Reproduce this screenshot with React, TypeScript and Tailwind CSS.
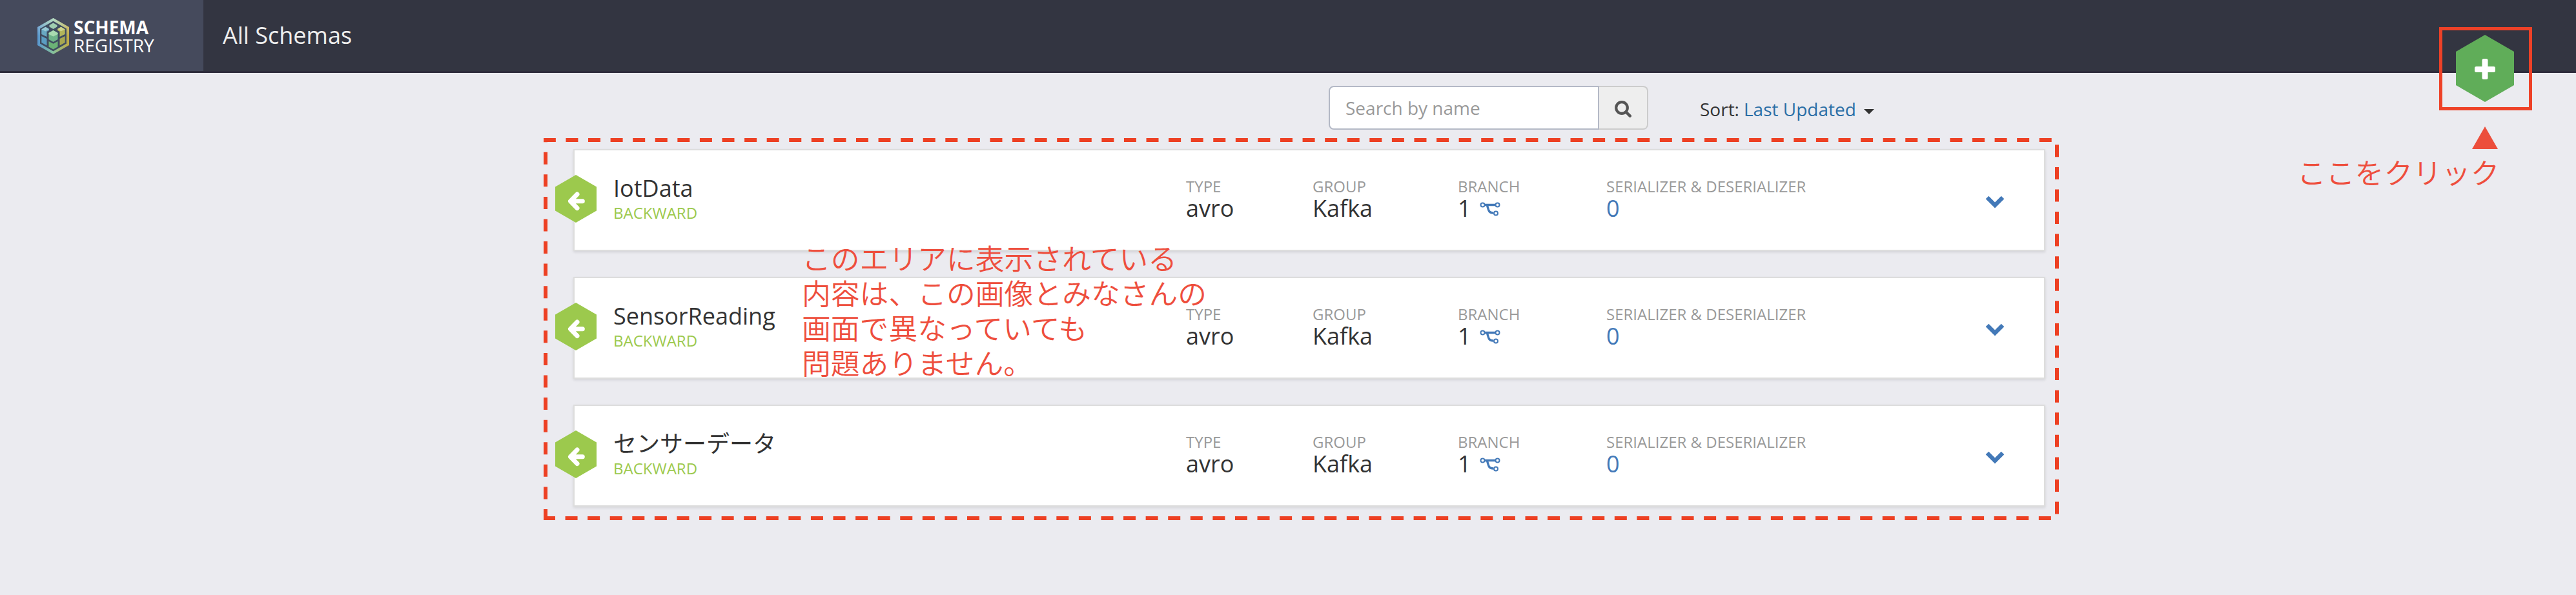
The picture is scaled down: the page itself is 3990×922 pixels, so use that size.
const SANS = 'font-["Open_Sans","Noto_Sans_CJK_JP",sans-serif]';

const schemas = ["IotData", "SensorReading", "センサーデータ"];

function Logo() {
  return (
    <svg className="h-[56px] w-[49px] shrink-0" viewBox="0 0 49 56" fill="none">
      <defs>
        <linearGradient id="edge" x1="0" y1="0" x2="49" y2="0" gradientUnits="userSpaceOnUse">
          <stop offset="0" stopColor="#5896d0" />
          <stop offset="0.5" stopColor="#86c29c" />
          <stop offset="1" stopColor="#c2a943" />
        </linearGradient>
        <linearGradient id="shine" x1="0" y1="0" x2="0" y2="56" gradientUnits="userSpaceOnUse">
          <stop offset="0" stopColor="#fff" stopOpacity="0.4" />
          <stop offset="0.5" stopColor="#fff" stopOpacity="0" />
        </linearGradient>
      </defs>
      <path d="M24.500 2.300 47 15.200V40.800L24.500 53.700 2 40.800V15.200Z" fill="#3f4c60" stroke="url(#edge)" strokeWidth="4" />
      <path d="M24.500 2.300 47 15.200V40.800L24.500 53.700 2 40.800V15.200Z" stroke="url(#shine)" strokeWidth="4" />
      <path d="M24.500 7.500 30.500 11V13.500L24.500 17 18.500 13.500V11Z" fill="#9fceb0" />
      <path d="M12.500 13.800 18 17V19L14.500 21V29L6.300 25V17.500Z" fill="#68a8c2" />
      <path d="M12.500 13.800 18 17 12.500 20.500 6.300 17.500Z" fill="#97c9d4" />
      <path d="M36.500 13.800 31 17V19L34.500 21V29L42.700 25V17.500Z" fill="#b3b55a" />
      <path d="M36.500 13.800 31 17 36.500 20.500 42.700 17.500Z" fill="#cfd58a" />
      <path d="M24.500 19 31.500 23V33L24.500 37 17.500 33V23Z" fill="#6fb489" />
      <path d="M24.500 19 31.500 23V25L24.500 28.500 17.500 25V23Z" fill="#a9dbb0" />
      <path d="M6.300 28 14.500 32V42.500L6.300 38Z" fill="#5b9dc2" />
      <path d="M42.700 28 34.500 32V42.500L42.700 38Z" fill="#a8a851" />
      <path d="M17.500 36 24.500 39.800 31.500 36V44.500L24.500 48.500 17.500 44.500Z" fill="#6bb276" />
    </svg>
  );
}

function BranchIcon() {
  return (
    <svg className="mt-[2px] h-[22px] w-[32px]" viewBox="0 0 32 22" fill="none" stroke="#4379b8">
      <path d="M7 4.500H25M11.500 5.500C13.500 11 13 17 21 17" strokeWidth="3.400" />
      <circle cx="4.500" cy="4.500" r="3" strokeWidth="2" fill="#fff" />
      <circle cx="27.500" cy="4.500" r="3" strokeWidth="2" fill="#fff" />
      <circle cx="25" cy="17.500" r="3" strokeWidth="2" fill="#fff" />
    </svg>
  );
}

function Field({ label, value, link, icon, width }: { label: string; value: string; link?: boolean; icon?: boolean; width: string }) {
  return (
    <div className={width}>
      <div className="text-[24px] leading-[32px] text-[#999]">{label}</div>
      <div className={`flex items-center gap-[13px] text-[36px] leading-[36px] ${link ? "text-[#4379b8]" : "text-[#333]"}`}>
        {value}
        {icon && <BranchIcon />}
      </div>
    </div>
  );
}

function SchemaCard({ name }: { name: string }) {
  return (
    <div className="relative flex h-[158px] w-[2280px] border-2 border-[#ddd] bg-white pl-[60px] shadow-[0_2px_4px_rgba(0,0,0,0.1)]">
      <svg className="absolute top-[38px] left-[-30px] h-[74px] w-[64px]" viewBox="0 0 64 74" fill="none">
        <path d="M32 0 64 18.500V55.500L32 74 0 55.500V18.500Z" fill="#9cc94d" />
        <path d="M34 30 23.500 40.700 34 51.500M25 40.700H42.300" stroke="#fff" strokeWidth="7" strokeLinecap="round" strokeLinejoin="round" />
      </svg>
      <div className="w-[887px] pt-[34px]">
        <div className="text-[36px] leading-[50px] text-[#333]">{name}</div>
        <div className="text-[24px] leading-[26px] text-[#9cc94d]">BACKWARD</div>
      </div>
      <div className="flex pt-[40px]">
        <Field label="TYPE" value="avro" width="w-[196px]" />
        <Field label="GROUP" value="Kafka" width="w-[225px]" />
        <Field label="BRANCH" value="1" icon width="w-[230px]" />
        <Field label="SERIALIZER & DESERIALIZER" value="0" link width="w-[587px]" />
      </div>
      <svg className="mt-[70px] h-[20px] w-[30px]" viewBox="0 0 30 20" fill="none">
        <path d="M3 3 15 15 27 3" stroke="#4379b8" strokeWidth="6.500" />
      </svg>
    </div>
  );
}

export default function App() {
  return (
    <div className={`relative h-[922px] w-[3990px] overflow-hidden bg-[#ebebf0] ${SANS}`}>
      <header className="flex h-[113px] border-b-[3px] border-[#2e2d3c] bg-[#333541]">
        <div className="flex w-[315px] items-center gap-[7px] bg-[#454a5c] pt-[2px] pl-[58px] text-[28px] leading-[28px] text-white">
          <Logo />
          <div>
            <div className="font-bold">SCHEMA</div>
            <div>REGISTRY</div>
          </div>
        </div>
        <h1 className="pt-[30px] pl-[30px] text-[36px] leading-[50px] text-[#eee]">All Schemas</h1>
      </header>

      <div className="flex pt-[20px] pl-[2058px]">
        <div className="flex h-[68px] w-[495px] text-[28px]">
          <div className="flex w-[419px] items-center rounded-l-[8px] border-2 border-[#b4b9c6] bg-white pl-[24px] text-[#999]">Search by name</div>
          <div className="flex flex-1 items-center justify-center rounded-r-[8px] border-2 border-l-0 border-[#ccc] bg-[#eee] pt-[3px]">
            <svg className="h-[26px] w-[26px]" viewBox="0 0 26 26" fill="none" stroke="#555">
              <circle cx="11" cy="11" r="8.800" strokeWidth="4.200" />
              <path d="M17.500 17.500 23.700 23.700" strokeWidth="4.500" strokeLinecap="round" />
            </svg>
          </div>
        </div>
        <div className="flex items-center pt-[4px] pl-[80px] text-[28px] text-[#333]">
          Sort:<span className="pl-[7px] text-[#2a6ea6]">Last Updated</span>
          <svg className="mt-[8px] ml-[12px] h-[8px] w-[16px]" viewBox="0 0 16 8">
            <path d="M0 0H16L8 8Z" fill="#333" />
          </svg>
        </div>
      </div>

      <main className="flex flex-col gap-[40px] pt-[30px] pl-[888px]">
        {schemas.map((name) => (
          <SchemaCard key={name} name={name} />
        ))}
      </main>

      <svg className="absolute top-[211px] left-[839px] h-[598px] w-[2353px]" viewBox="0 0 2353 598" fill="none">
        <path d="M6 592V6H2347V592Z" stroke="#ed4023" strokeWidth="6" strokeDasharray="19 15.580" strokeDashoffset="5" />
      </svg>
      <div className='absolute top-[372px] left-[1242px] font-["Noto_Sans_CJK_JP",sans-serif] text-[44.8px] leading-[54px] font-[350] whitespace-nowrap text-[#ee4e3d]'>
        <div>このエリアに表示されている</div>
        <div>内容は、この画像とみなさんの</div>
        <div>画面で異なっていても</div>
        <div>問題ありません。</div>
      </div>

      <svg className="absolute top-[54px] left-[3804px] h-[104px] w-[90px]" viewBox="0 0 90 104">
        <path d="M45 0 90 26V78L45 104 0 78V26Z" fill="#60ad59" />
        <rect x="40.500" y="37" width="9" height="32" rx="2.500" fill="#fff" />
        <rect x="29" y="49" width="32" height="9" rx="2.500" fill="#fff" />
      </svg>
      <div className="absolute top-[42px] left-[3778px] h-[129px] w-[144px] border-5 border-[#ee4127]" />
      <svg className="absolute top-[196px] left-[3829px] h-[35px] w-[40px]" viewBox="0 0 40 35">
        <path d="M20 0 40 35H0Z" fill="#ec4e3c" />
      </svg>
      <div className='absolute top-[239px] left-[3558px] font-["Noto_Sans_CJK_JP",sans-serif] text-[44.8px] leading-[54px] font-[350] whitespace-nowrap text-[#ee4e3d]'>
        ここをクリック
      </div>
    </div>
  );
}
